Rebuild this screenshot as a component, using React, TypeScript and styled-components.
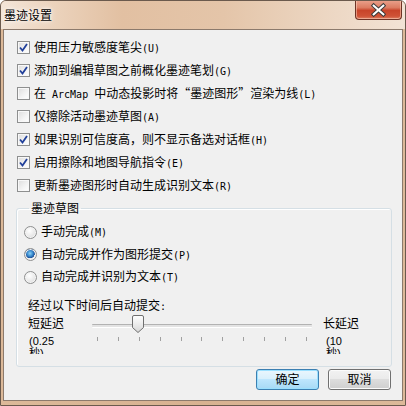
import { ReactElement, ReactNode } from "react";
import styled, { createGlobalStyle } from "styled-components";

const GlobalStyle = createGlobalStyle`
    html, body {
        margin: 0;
        padding: 0;
        background: #ffffff;
    }
    body {
        font-family: "Noto Sans CJK SC", "Liberation Sans", sans-serif;
        font-size: 12px;
        color: #000000;
    }
`;

const options = [
    { text: "使用压力敏感度笔尖(U)", checked: true },
    { text: "添加到编辑草图之前概化墨迹笔划(G)", checked: true },
    { text: "在 ArcMap 中动态投影时将“墨迹图形”渲染为线(L)", checked: false },
    { text: "仅擦除活动墨迹草图(A)", checked: false },
    { text: "如果识别可信度高，则不显示备选对话框(H)", checked: true },
    { text: "启用擦除和地图导航指令(E)", checked: true },
    { text: "更新墨迹图形时自动生成识别文本(R)", checked: false },
];

const modes = [
    { text: "手动完成(M)", selected: false },
    { text: "自动完成并作为图形提交(P)", selected: true },
    { text: "自动完成并识别为文本(T)", selected: false },
];

// ascii runs get the narrow half-width font, like SimSun does in the original
function mixed(text: string): ReactNode[] {
    return text.split(/([ -~]+)/).map((part, i) =>
        i % 2 === 1 ? <Latin key={i}>{part}</Latin> : part
    );
}

function CheckMark(): ReactElement {
    return (
        <svg width="9" height="9" viewBox="0 0 9 9">
            <path d="M1 4.5 L3.5 7.5 L8 1" fill="none" stroke="#21409a" strokeWidth="1.8" />
        </svg>
    );
}

export default function App(): ReactElement {
    const ticks = Array.from({ length: 11 });

    return (
        <>
            <GlobalStyle />
            <Window>
                <TitleBar>
                    <Title>墨迹设置</Title>
                    <CloseButton>
                        <svg width="47" height="20" viewBox="0 0 47 20">
                            <path d="M18.5 5.5 L28.5 14.5 M28.5 5.5 L18.5 14.5" stroke="#3b3b3b" strokeWidth="4.2" strokeLinecap="square" />
                            <path d="M18.5 5.5 L28.5 14.5 M28.5 5.5 L18.5 14.5" stroke="#ffffff" strokeWidth="2.2" strokeLinecap="square" />
                        </svg>
                    </CloseButton>
                </TitleBar>
                <Client>
                    <OptionList>
                        {options.map(option => (
                            <CheckRow key={option.text}>
                                <CheckBox $checked={option.checked}>
                                    {option.checked && <CheckMark />}
                                </CheckBox>
                                <span>{mixed(option.text)}</span>
                            </CheckRow>
                        ))}
                    </OptionList>
                    <GroupBox>
                        <GroupLegend>墨迹草图</GroupLegend>
                        {modes.map(mode => (
                            <RadioRow key={mode.text}>
                                <Radio $selected={mode.selected} />
                                <span>{mixed(mode.text)}</span>
                            </RadioRow>
                        ))}
                        <DelayCaption>{mixed("经过以下时间后自动提交:")}</DelayCaption>
                        <SliderGrid>
                            <SliderEnd>短延迟</SliderEnd>
                            <TrackCell>
                                <Track />
                                <Thumb>
                                    <svg width="12" height="18" viewBox="0 0 12 18">
                                        <defs>
                                            <linearGradient id="thumbFill" x1="0" y1="0" x2="0" y2="1">
                                                <stop offset="0" stopColor="#ffffff" />
                                                <stop offset="0.5" stopColor="#ececec" />
                                                <stop offset="1" stopColor="#d6d6d6" />
                                            </linearGradient>
                                        </defs>
                                        <path d="M2 0.5 H10 Q11.5 0.5 11.5 2 V12.5 L6 17.5 L0.5 12.5 V2 Q0.5 0.5 2 0.5 Z" fill="url(#thumbFill)" stroke="#6f6f6f" />
                                    </svg>
                                </Thumb>
                            </TrackCell>
                            <SliderEnd $right>长延迟</SliderEnd>
                            <EndNote>(0.25<br />秒)</EndNote>
                            <Ticks>
                                {ticks.map((_, i) => <Tick key={i} />)}
                            </Ticks>
                            <EndNote $right>(10<br />秒)</EndNote>
                        </SliderGrid>
                    </GroupBox>
                    <ButtonBar>
                        <Button $primary>确定</Button>
                        <Button>取消</Button>
                    </ButtonBar>
                </Client>
            </Window>
        </>
    );
}

const Window = styled.div`
    box-sizing: border-box;
    width: 406px;
    height: 406px;
    display: flex;
    flex-direction: column;
    padding: 0 2px 4px 2px;
    border: 1px solid #6b5a4d;
    border-radius: 6px 6px 0 0;
    background: linear-gradient(90deg, #dcb999 0%, #d8b291 50%, #dcb999 100%);
    overflow: hidden;
`;

const TitleBar = styled.div`
    height: 28px;
    margin: 0 -2px;
    padding: 0 3px 0 3px;
    display: flex;
    align-items: flex-start;
    justify-content: space-between;
    background: linear-gradient(90deg, #f3e5d8 0%, #ecd4be 12%, #e2c0a2 30%, #e4c5a9 55%, #ecd6c2 80%, #f2e3d5 100%);
`;

const Title = styled.div`
    margin-top: 6px;
    font-size: 12px;
    line-height: 16px;
    color: #000000;
    text-shadow: 0 0 6px #ffffff, 0 0 3px #ffffff;
`;

const CloseButton = styled.div`
    width: 47px;
    height: 20px;
    margin-top: -1px;
    box-sizing: border-box;
    border: 1px solid #6e3326;
    border-top: none;
    border-radius: 0 0 4px 4px;
    background: linear-gradient(180deg, #eba38e 0%, #dc7c62 40%, #c8442a 55%, #cf5236 85%, #dd7f63 100%);
    box-shadow: inset 0 0 0 1px rgba(255, 220, 200, 0.5);
    display: flex;
    svg {
        display: block;
    }
`;

const Client = styled.div`
    flex: 1;
    display: flex;
    flex-direction: column;
    border: 1px solid #8c7a6c;
    background: #f0f0f0;
`;

const OptionList = styled.div`
    padding: 6px 0 0 13px;
    display: flex;
    flex-direction: column;
`;

const CheckRow = styled.div`
    height: 23px;
    display: flex;
    align-items: center;
    gap: 4px;
    line-height: 14px;
    white-space: nowrap;
`;

const CheckBox = styled.div<{ $checked?: boolean }>`
    box-sizing: border-box;
    width: 13px;
    height: 13px;
    flex: none;
    border: 1px solid #8e8f8f;
    background: linear-gradient(135deg, #dcdcdc 0%, #f4f4f4 60%, #ffffff 100%);
    box-shadow: inset 0 0 0 1px #f8f8f8;
    display: flex;
    align-items: center;
    justify-content: center;
`;

const Latin = styled.span`
    font-family: "DejaVu Sans Mono", "Liberation Mono", monospace;
    font-size: 10px;
`;

const GroupBox = styled.fieldset`
    margin: 4px 10px 0 12px;
    padding: 0 10px 11px 7px;
    border: 1px solid #d5dfe5;
    border-radius: 3px;
    box-shadow: inset 1px 1px 0 #ffffff;
    min-inline-size: 0;
`;

const GroupLegend = styled.legend`
    margin-left: 5px;
    padding: 0 2px;
    line-height: 14px;
`;

const RadioRow = styled.div`
    height: 22.5px;
    display: flex;
    align-items: center;
    gap: 4px;
    line-height: 14px;
    white-space: nowrap;
    &:first-of-type {
        margin-top: 6px;
    }
`;

const Radio = styled.div<{ $selected?: boolean }>`
    box-sizing: border-box;
    width: 13px;
    height: 13px;
    flex: none;
    border-radius: 50%;
    border: 1px solid #8e8f8f;
    background: ${p => p.$selected
        ? "radial-gradient(circle at 45% 40%, #8ed1f5 0%, #3d8fd1 30%, #1b4f97 52%, #e9e9e9 56%, #ffffff 100%)"
        : "radial-gradient(circle at 40% 35%, #ffffff 0%, #e6e6e6 60%, #d2d2d2 100%)"};
    box-shadow: inset 0 0 0 1px #f4f4f4;
`;

const DelayCaption = styled.div`
    margin: 9px 0 0 4px;
    line-height: 14px;
`;

const SliderGrid = styled.div`
    margin: 1px 0 0 4px;
    display: grid;
    grid-template-columns: 64px 220px 1fr;
    grid-template-rows: 16px 20px;
    row-gap: 4px;
`;

const SliderEnd = styled.div<{ $right?: boolean }>`
    line-height: 16px;
    padding-left: ${p => (p.$right ? "11px" : "0")};
`;

const TrackCell = styled.div`
    position: relative;
    display: flex;
    align-items: center;
`;

const Track = styled.div`
    box-sizing: border-box;
    width: 100%;
    height: 4px;
    margin-top: 6px;
    border-top: 1px solid #b2b2b2;
    border-bottom: 1px solid #ffffff;
    background: #e3e3e3;
    border-radius: 1px;
`;

const Thumb = styled.div`
    position: absolute;
    left: 40px;
    top: 0;
    svg {
        display: block;
    }
`;

const Ticks = styled.div`
    padding: 2px 5px 0 5px;
    display: flex;
    align-items: flex-start;
    justify-content: space-between;
`;

const Tick = styled.div`
    width: 1px;
    height: 4px;
    background: #a0a0a0;
`;

const EndNote = styled.div<{ $right?: boolean }>`
    height: 19px;
    overflow: hidden;
    margin-left: ${p => (p.$right ? "14px" : "1px")};
    font-family: "Liberation Sans", "Noto Sans CJK SC", sans-serif;
    font-size: 11px;
    line-height: 12px;
`;

const ButtonBar = styled.div`
    margin-top: 2px;
    padding-right: 11px;
    display: flex;
    justify-content: flex-end;
    gap: 9px;
`;

const Button = styled.div<{ $primary?: boolean }>`
    box-sizing: border-box;
    width: 63px;
    height: 21px;
    display: flex;
    align-items: center;
    justify-content: center;
    border-radius: 3px;
    border: 1px solid ${p => (p.$primary ? "#3c7fb1" : "#707070")};
    background: ${p => p.$primary
        ? "linear-gradient(180deg, #eaf6fd 0%, #d9f0fc 45%, #bee6fd 50%, #a7d9f5 100%)"
        : "linear-gradient(180deg, #f2f2f2 0%, #ebebeb 45%, #dddddd 50%, #cfcfcf 100%)"};
    box-shadow: inset 0 0 0 1px ${p => (p.$primary ? "#9be0ff" : "#fbfbfb")};
    line-height: 14px;
`;
